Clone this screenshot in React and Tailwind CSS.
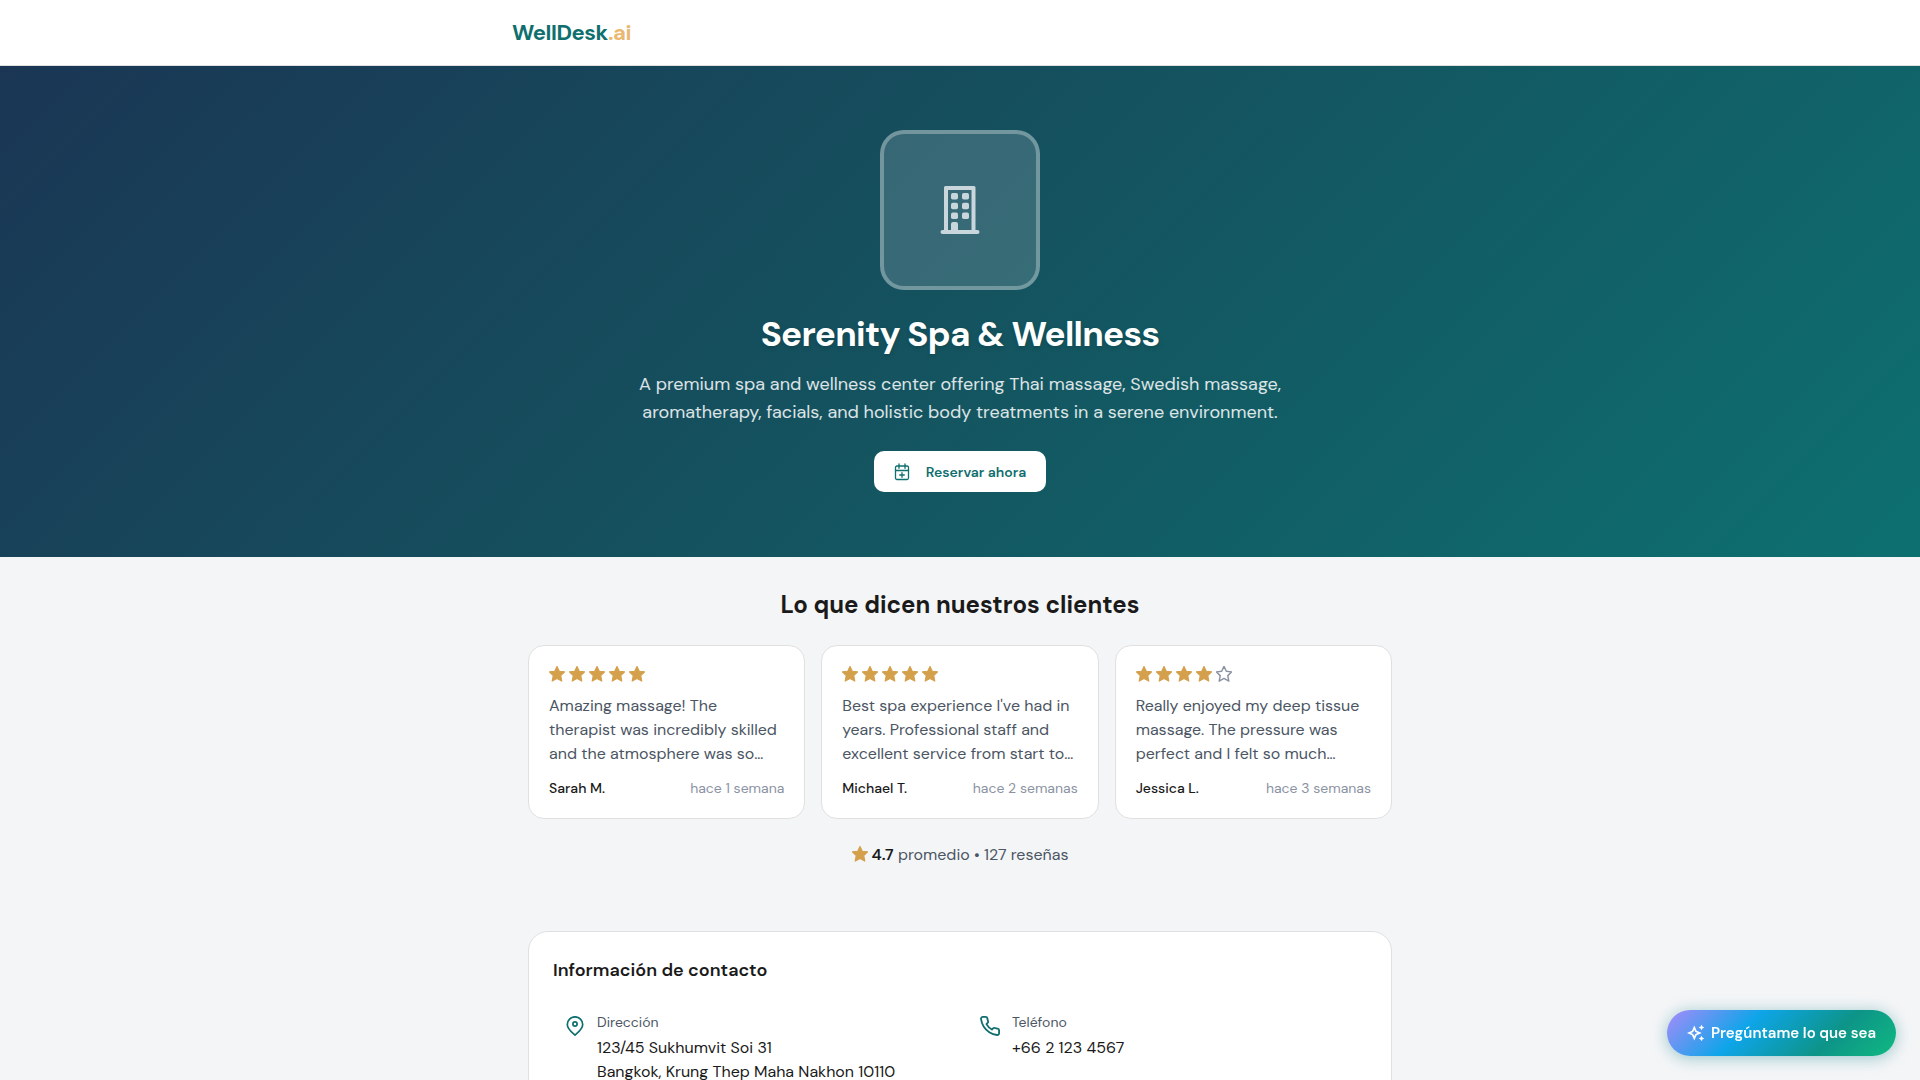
import React from "react";

const STAR =
  "M12 1.5 15.2 8.2 22.6 9.1 17.2 14.2 18.6 21.8 12 18.1 5.4 21.8 6.8 14.2 1.4 9.1 8.8 8.2Z";

function Star({ empty }) {
  return (
    <svg viewBox="1 1 22 22" className="size-4 shrink-0" aria-hidden="true">
      <path
        d={STAR}
        fill={empty ? "none" : "#d4a04c"}
        stroke={empty ? "#8b93a3" : "#d4a04c"}
        strokeWidth={empty ? 2 : 1.5}
        strokeLinejoin="round"
      />
    </svg>
  );
}

function BuildingIcon() {
  return (
    <svg viewBox="0 0 40 48" className="h-12 w-10" fill="#c9d6db" aria-hidden="true">
      <path fillRule="evenodd" d="M5.500 0H34a1.500 1.500 0 0 1 1.500 1.500V44H37.500a2 2 0 0 1 0 4H2.500a2 2 0 0 1 0-4H4V1.500A1.500 1.500 0 0 1 5.500 0ZM8 4V44H11V38a2 2 0 0 1 2-2h3a2 2 0 0 1 2 2v6H31.500V4Z" />
      {[7, 16.8, 26.5].map((y) => (
        <g key={y}>
          <rect x="11" y={y} width="7" height="6.500" rx="1.800" />
          <rect x="22" y={y} width="7" height="6.500" rx="1.800" />
        </g>
      ))}
    </svg>
  );
}

function CalendarPlusIcon() {
  return (
    <svg viewBox="0 0 16 18" className="h-[18px] w-4" fill="none" stroke="#0f6e6e" strokeWidth="1.3" strokeLinecap="round" strokeLinejoin="round" aria-hidden="true">
      <rect x="1.500" y="3" width="13" height="13.500" rx="1.500" />
      <path d="M5 1v4.300M11 1v4.300M1.500 7.500h13M8 9.700v4.600M5.700 12h4.600" />
    </svg>
  );
}

function PinIcon() {
  return (
    <svg viewBox="0 0 20 20" className="size-5 shrink-0" fill="none" stroke="#0f6e6e" strokeWidth="1.700" strokeLinejoin="round" aria-hidden="true">
      <path d="M10 19.100C7.200 16.600 2.300 13 2.300 8.500a7.700 7.700 0 0 1 15.400 0C17.700 13 12.800 16.600 10 19.100Z" />
      <circle cx="10" cy="8" r="2.100" />
    </svg>
  );
}

function PhoneIcon() {
  return (
    <svg viewBox="1 1 22 22" className="size-5 shrink-0" fill="none" stroke="#0f6e6e" strokeWidth="2" strokeLinejoin="round" aria-hidden="true">
      <path d="M22 16.920v3a2 2 0 0 1-2.180 2 19.790 19.790 0 0 1-8.630-3.070 19.500 19.500 0 0 1-6-6 19.790 19.790 0 0 1-3.070-8.670A2 2 0 0 1 4.110 2h3a2 2 0 0 1 2 1.720 12.840 12.840 0 0 0 .7 2.810 2 2 0 0 1-.45 2.110L8.090 9.910a16 16 0 0 0 6 6l1.270-1.270a2 2 0 0 1 2.110-.45 12.840 12.840 0 0 0 2.810.7A2 2 0 0 1 22 16.920Z" />
    </svg>
  );
}

function SparklesIcon() {
  return (
    <svg viewBox="0 0 18 18" className="size-[18px] shrink-0" fill="white" aria-hidden="true">
      <path fillRule="evenodd" d="M7.300 1.500 9.600 6.700 14.800 9 9.600 11.300 7.300 16.500 5 11.300-.2 9 5 6.700ZM7.300 5.700 6.300 8 4 9 6.300 10 7.300 12.300 8.300 10 10.600 9 8.300 8Z" />
      <path d="M14.500 .7 15.400 2.600 17.300 3.500 15.400 4.400 14.500 6.300 13.600 4.400 11.700 3.500 13.600 2.600ZM14.500 11.700 15.400 13.600 17.300 14.500 15.400 15.400 14.500 17.300 13.600 15.400 11.700 14.500 13.600 13.600Z" />
    </svg>
  );
}

const reviews = [
  { name: "Sarah M.", when: "hace 1 semana", stars: 5, lines: ["Amazing massage! The", "therapist was incredibly skilled", "and the atmosphere was so…"] },
  { name: "Michael T.", when: "hace 2 semanas", stars: 5, lines: ["Best spa experience I've had in", "years. Professional staff and", "excellent service from start to…"] },
  { name: "Jessica L.", when: "hace 3 semanas", stars: 4, lines: ["Really enjoyed my deep tissue", "massage. The pressure was", "perfect and I felt so much…"] },
];

function Review({ name, when, stars, lines }) {
  return (
    <article className="rounded-2xl border border-[#e0e0e0] bg-white p-5">
      <div className="flex h-4 items-center gap-1" role="img" aria-label={`${stars} de 5 estrellas`}>
        {[1, 2, 3, 4, 5].map((n) => (
          <Star key={n} empty={n > stars} />
        ))}
      </div>
      <p className="mt-3 text-base leading-6 whitespace-nowrap text-[#4b5563]">
        {lines.map((line) => (
          <span key={line} className="block">{line}</span>
        ))}
      </p>
      <div className="mt-3 flex items-center justify-between text-sm leading-5">
        <span className="font-medium text-[#1a1a1a]">{name}</span>
        <span className="text-[#8b93a3]">{when}</span>
      </div>
    </article>
  );
}

function ContactItem({ icon, label, children }) {
  return (
    <div className="flex gap-3 p-3">
      <div className="pt-1">{icon}</div>
      <div>
        <div className="text-sm leading-[21px] text-[#4b5563]">{label}</div>
        <div className="mt-[3px] text-base leading-6">{children}</div>
      </div>
    </div>
  );
}

export default function App() {
  return (
    <div className="h-screen overflow-hidden bg-[#f4f5f7] font-['DM_Sans',Inter,sans-serif] text-[#1a1a1a]">
      <header className="border-b border-[#e0e0e0] bg-white">
        <div className="mx-auto flex h-[65px] max-w-[896px] items-center">
          <a href="#" className="text-[22px] font-bold tracking-[-0.02em] text-[#0f6e6e]">
            WellDesk<span className="text-[#e9b872]">.ai</span>
          </a>
        </div>
      </header>

      <section className="flex flex-col items-center bg-[linear-gradient(135deg,#1a3654_0%,#14535f_50%,#0d7070_100%)] pt-16 pb-[65px]">
        <div className="flex size-40 items-center justify-center rounded-3xl border-4 border-white/30 bg-white/15">
          <BuildingIcon />
        </div>
        <h1 className="mt-5 text-[35px] leading-12 font-bold tracking-[-0.02em] text-white [text-shadow:0_2px_4px_rgba(0,0,0,0.15)]">
          Serenity Spa &amp; Wellness
        </h1>
        <p className="mt-3 text-center text-lg leading-7 text-white/85">
          A premium spa and wellness center offering Thai massage, Swedish massage,
          <br />
          aromatherapy, facials, and holistic body treatments in a serene environment.
        </p>
        <button type="button" className="mt-[25px] flex h-[41px] items-center gap-4 rounded-[10px] bg-white px-5 text-sm font-semibold text-[#0f6e6e]">
          <CalendarPlusIcon />
          Reservar ahora
        </button>
      </section>

      <main className="mx-auto max-w-[864px]">
        <section className="pt-8">
          <h2 className="text-center text-2xl leading-8 font-bold">Lo que dicen nuestros clientes</h2>
          <div className="mt-6 grid grid-cols-3 gap-4">
            {reviews.map((review) => (
              <Review key={review.name} {...review} />
            ))}
          </div>
          <p className="mt-6 flex items-center justify-center gap-1 text-base leading-6 text-[#4b5563]">
            <span className="pb-[2px]"><Star /></span>
            <span><strong className="font-semibold text-[#1a1a1a]">4.7</strong> promedio • 127 reseñas</span>
          </p>
        </section>

        <section className="mt-16 rounded-[20px] border border-[#e0e0e0] bg-white p-6">
          <h2 className="text-lg leading-7 font-semibold">Información de contacto</h2>
          <div className="mt-4 grid grid-cols-2 gap-4">
            <ContactItem icon={<PinIcon />} label="Dirección">
              123/45 Sukhumvit Soi 31
              <br />
              Bangkok, Krung Thep Maha Nakhon 10110
            </ContactItem>
            <ContactItem icon={<PhoneIcon />} label="Teléfono">
              <a href="tel:+6621234567">+66 2 123 4567</a>
            </ContactItem>
          </div>
        </section>
      </main>

      <button type="button" className="fixed right-6 bottom-6 flex h-[46px] items-center gap-[6px] rounded-full bg-[linear-gradient(135deg,#a78bfa_0%,#0ea5e9_35%,#0d9488_70%,#10b981_100%)] px-5 text-[15px] font-semibold text-white shadow-[0_2px_16px_rgba(13,130,140,0.4)]">
        <SparklesIcon />
        Pregúntame lo que sea
      </button>
    </div>
  );
}
